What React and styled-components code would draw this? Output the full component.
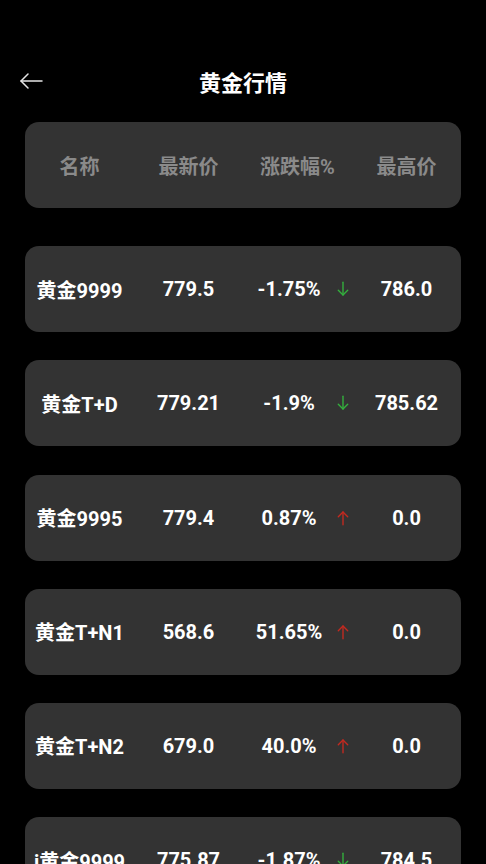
import React from 'react';
import styled, { createGlobalStyle } from 'styled-components';

const GlobalStyle = createGlobalStyle`
	html, body {
		margin: 0;
		padding: 0;
		background: #000;
	}
	body {
		font-family: Roboto, "Noto Sans CJK SC", sans-serif;
		color: #fff;
		overflow: hidden;
	}
`;

const Page = styled.div`
	width: 486px;
	height: 864px;
	overflow: hidden;
	background: #000;
`;

const TopBar = styled.div`
	margin-top: 50px;
	height: 62px;
	display: flex;
	align-items: center;
	justify-content: center;
	position: relative;
`;

const Back = styled.button`
	position: absolute;
	left: 18px;
	top: 20px;
	width: 26px;
	height: 22px;
	padding: 0;
	border: 0;
	background: none;
	display: flex;
	align-items: center;
	justify-content: center;
`;

const Title = styled.h1`
	margin: 0;
	font-size: 22px;
	font-weight: 700;
	letter-spacing: 0;
	color: #fff;
`;

const List = styled.div`
	margin-top: 10px;
	padding: 0 25px;
	display: flex;
	flex-direction: column;
	gap: 28.2px;
`;

const Card = styled.div`
	height: 86px;
	border-radius: 14px;
	background: #333;
	display: grid;
	grid-template-columns: repeat(4, 1fr);
	align-items: center;
	text-align: center;
	font-size: 20px;
	font-weight: 700;
	color: ${p => (p.$head ? '#8a8a8a' : '#fff')};
	margin-bottom: ${p => (p.$head ? '10px' : '0')};
	flex-shrink: 0;
`;

const Cell = styled.div`
	white-space: nowrap;
`;

const ChangeCell = styled.div`
	display: flex;
	align-items: center;
	white-space: nowrap;
`;

const ChangeText = styled.span`
	flex: 1;
	text-align: center;
`;

const ArrowBox = styled.span`
	width: 12px;
	margin: 0 3px 0 2px;
	display: flex;
	justify-content: center;
`;

const Arrow = ({ up }) => (
	<ArrowBox>
		<svg width="14" height="18" viewBox="0 0 14 18" fill="none"
			stroke={up ? '#c4291f' : '#33b03d'} strokeWidth="1.6" strokeLinecap="round" strokeLinejoin="round">
			{up ? (
				<>
					<path d="M7 2v15" />
					<path d="M1.5 7.5L7 2l5.5 5.5" />
				</>
			) : (
				<>
					<path d="M7 1v15" />
					<path d="M1.5 10.5L7 16l5.5-5.5" />
				</>
			)}
		</svg>
	</ArrowBox>
);

const rows = [
	{ name: '黄金9999', price: '779.5', change: '-1.75%', up: false, high: '786.0' },
	{ name: '黄金T+D', price: '779.21', change: '-1.9%', up: false, high: '785.62' },
	{ name: '黄金9995', price: '779.4', change: '0.87%', up: true, high: '0.0' },
	{ name: '黄金T+N1', price: '568.6', change: '51.65%', up: true, high: '0.0' },
	{ name: '黄金T+N2', price: '679.0', change: '40.0%', up: true, high: '0.0' },
	{ name: 'i黄金9999', price: '775.87', change: '-1.87%', up: false, high: '784.5' },
];

export default function App() {
	return (
		<Page>
			<GlobalStyle />
			<TopBar>
				<Back aria-label="返回">
					<svg width="24" height="18" viewBox="0 0 24 18" fill="none"
						stroke="#e6e6e6" strokeWidth="1.5" strokeLinecap="round" strokeLinejoin="round">
						<path d="M2 9h21" />
						<path d="M9 2L2 9l7 7" />
					</svg>
				</Back>
				<Title>黄金行情</Title>
			</TopBar>

			<List>
				<Card $head>
					<Cell>名称</Cell>
					<Cell>最新价</Cell>
					<Cell>涨跌幅%</Cell>
					<Cell>最高价</Cell>
				</Card>

				{rows.map(r => (
					<Card key={r.name}>
						<Cell>{r.name}</Cell>
						<Cell>{r.price}</Cell>
						<ChangeCell>
							<ChangeText>{r.change}</ChangeText>
							<Arrow up={r.up} />
						</ChangeCell>
						<Cell>{r.high}</Cell>
					</Card>
				))}
			</List>
		</Page>
	);
}
